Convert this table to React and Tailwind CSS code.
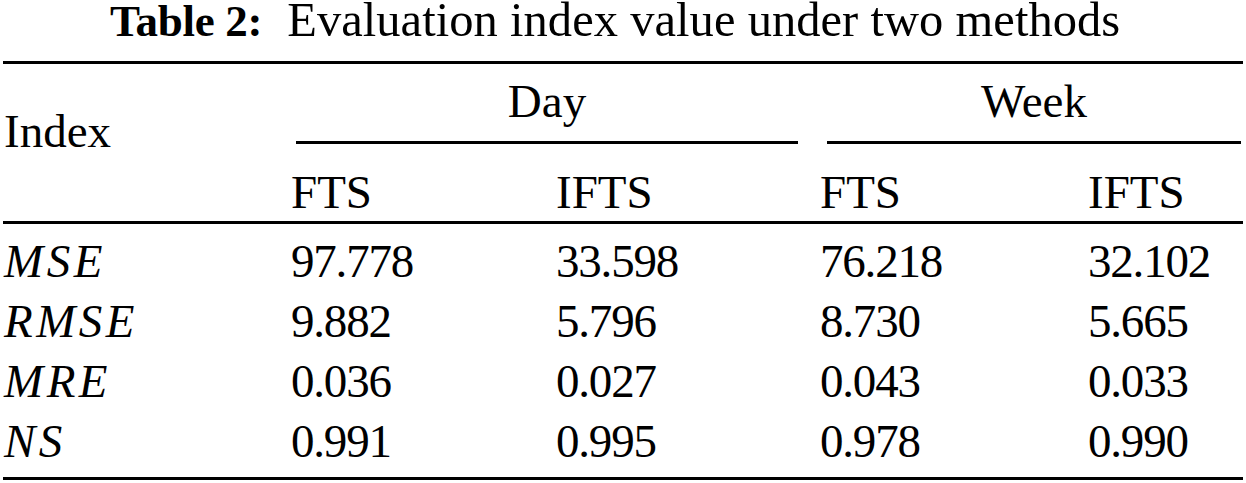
import React from 'react'

const rows = [
  { name: 'MSE', vals: ['97.778', '33.598', '76.218', '32.102'] },
  { name: 'RMSE', vals: ['9.882', '5.796', '8.730', '5.665'] },
  { name: 'MRE', vals: ['0.036', '0.027', '0.043', '0.033'] },
  { name: 'NS', vals: ['0.991', '0.995', '0.978', '0.990'] }
]

const cols = 'grid grid-cols-[288px_265px_264px_268px_1fr]'

const App = () => {
  return (
    <div className="w-[1246px] h-[483px] bg-white text-black px-[3px] font-['Liberation_Serif',serif] text-[47px] overflow-hidden">
      {/* Caption */}
      <div className="-mt-[7px] h-[54px] leading-[54px] pl-[107px] whitespace-nowrap">
        <span className="font-bold text-[45px] tracking-[-0.3px]">Table 2:</span>
        <span className="ml-[25px] text-[48.5px] tracking-[0.05px]">Evaluation index value under two methods</span>
      </div>

      {/* Top rule */}
      <div className="mt-[14px] h-[3px] bg-black" />

      {/* Header */}
      <div className={`${cols} h-[157px]`}>
        <div className="row-span-2 pl-[1px] pt-[47px] leading-[40px]">Index</div>
        <div className="col-span-2 ml-[5px] mr-[22px] pt-[17px]">
          <div className="h-[40px] leading-[40px] text-center">Day</div>
          <div className="mt-[20px] h-[3px] bg-black" />
        </div>
        <div className="col-span-2 ml-[7px] mr-[2px] pt-[17px]">
          <div className="h-[40px] leading-[40px] text-center">Week</div>
          <div className="mt-[20px] h-[3px] bg-black" />
        </div>
        <div className="leading-[40px] pt-[18px]">FTS</div>
        <div className="leading-[40px] pt-[18px]">IFTS</div>
        <div className="leading-[40px] pt-[18px]">FTS</div>
        <div className="leading-[40px] pt-[18px]">IFTS</div>
      </div>

      {/* Mid rule */}
      <div className="h-[3px] bg-black" />

      {/* Body */}
      <div className="pt-[7px]">
        {rows.map((r) => (
          <div key={r.name} className={`${cols} h-[60px] leading-[60px]`}>
            <div className="pl-[1px] italic tracking-[3.5px]">{r.name}</div>
            {r.vals.map((v, i) => (
              <div key={i} className="tracking-[-1.2px]">{v}</div>
            ))}
          </div>
        ))}
      </div>

      {/* Bottom rule */}
      <div className="mt-[6px] h-[3px] bg-black" />
    </div>
  )
}

export default App
